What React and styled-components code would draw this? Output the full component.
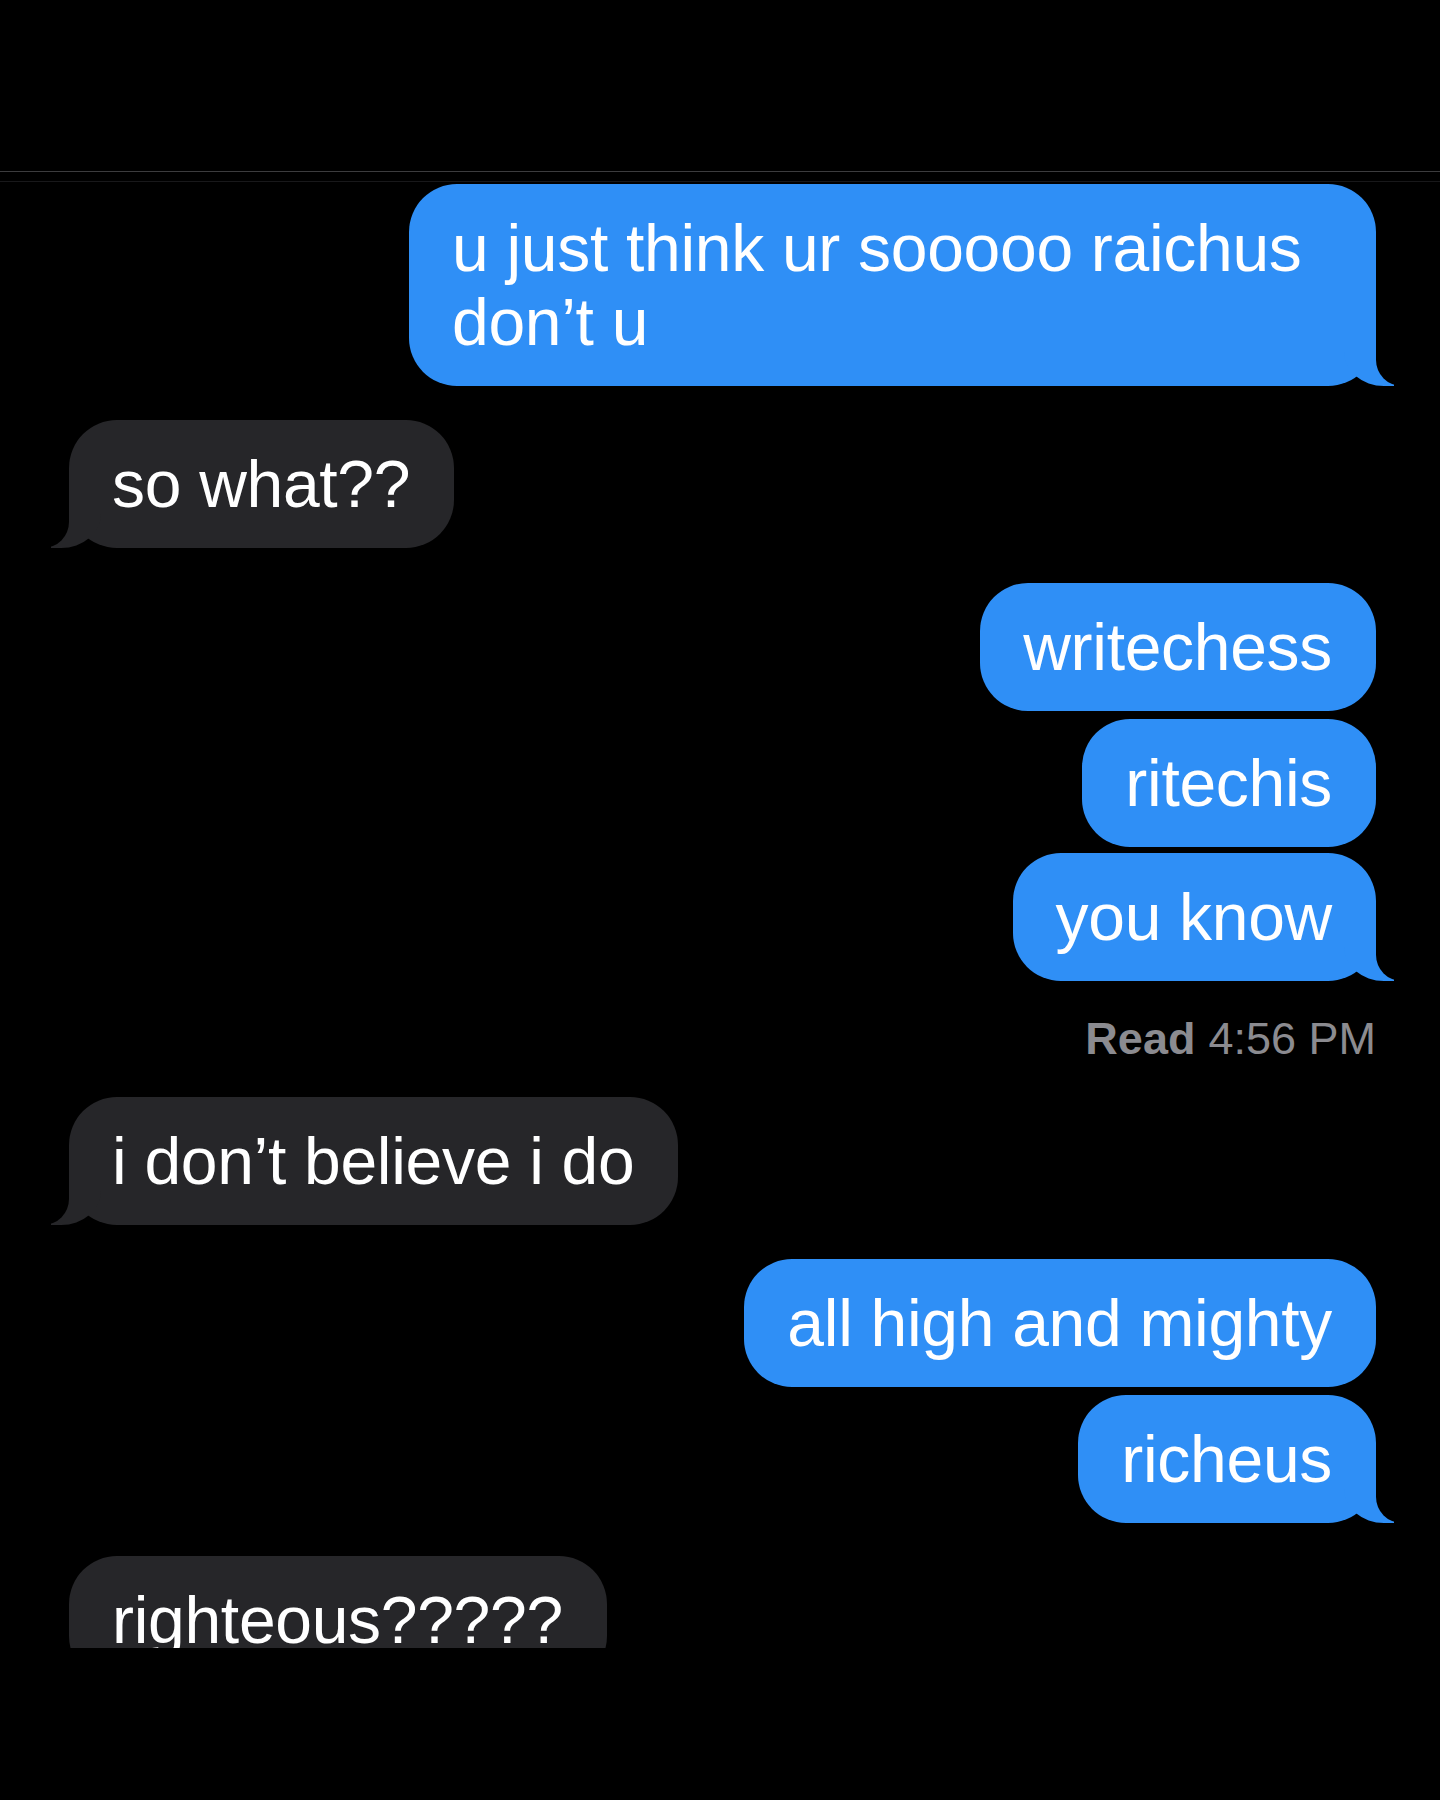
import React from "react";
import styled, { createGlobalStyle, css } from "styled-components";

const GlobalStyle = createGlobalStyle`
  html, body {
    margin: 0;
    padding: 0;
    background: #000;
  }
  body {
    font-family: "Liberation Sans", Arial, Helvetica, sans-serif;
    -webkit-font-smoothing: antialiased;
  }
  * { box-sizing: border-box; }
`;

const BLUE = "#2f8ff6";
const GRAY = "#262629";

const Page = styled.div`
  width: 1440px;
  height: 1800px;
  background: #000;
  display: flex;
  flex-direction: column;
  overflow: hidden;
`;

const Header = styled.header`
  height: 172px;
  flex: none;
  border-bottom: 1px solid #3c3c3e;
`;

const Thread = styled.main`
  flex: none;
  height: 1467px;
  margin-top: 9px;
  border-top: 1px solid #18181a;
  padding: 2px 64px 0 69px;
  display: flex;
  flex-direction: column;
  overflow: hidden;
`;

const Row = styled.div`
  display: flex;
  justify-content: ${(p) => (p.$mine ? "flex-end" : "flex-start")};
  margin-top: ${(p) => p.$gap}px;
  flex: none;
`;

const tailMine = css`
  &::before {
    content: "";
    position: absolute;
    bottom: 0;
    right: -18px;
    width: 50px;
    height: 58px;
    background: ${BLUE};
    border-bottom-left-radius: 40px 34px;
  }
  &::after {
    content: "";
    position: absolute;
    bottom: 0;
    right: -62px;
    width: 62px;
    height: 60px;
    background: #000;
    border-bottom-left-radius: 26px;
  }
`;

const tailTheirs = css`
  &::before {
    content: "";
    position: absolute;
    bottom: 0;
    left: -18px;
    width: 50px;
    height: 58px;
    background: ${GRAY};
    border-bottom-right-radius: 40px 34px;
  }
  &::after {
    content: "";
    position: absolute;
    bottom: 0;
    left: -62px;
    width: 62px;
    height: 60px;
    background: #000;
    border-bottom-right-radius: 26px;
  }
`;

const Bubble = styled.div`
  position: relative;
  max-width: 967px;
  padding: 27px 44px 27px 43px;
  border-radius: 48px;
  background: ${(p) => (p.$mine ? BLUE : GRAY)};
  color: #fff;
  font-size: 66px;
  line-height: 74px;
  letter-spacing: -0.3px;
  white-space: normal;
  ${(p) => p.$tail && (p.$mine ? tailMine : tailTheirs)}
`;

const BubbleText = styled.span`
  position: relative;
  z-index: 1;
`;

const Receipt = styled.div`
  display: flex;
  justify-content: flex-end;
  gap: 13px;
  margin-top: ${(p) => p.$gap}px;
  font-size: 45px;
  line-height: 54px;
  color: #8b8b90;
  flex: none;
`;

const ReceiptLabel = styled.span`
  font-weight: 700;
`;

const items = [
  { mine: true, tail: true, gap: 0, text: "u just think ur sooooo raichus don\u2019t u" },
  { mine: false, tail: true, gap: 34, text: "so what??" },
  { mine: true, tail: false, gap: 35, text: "writechess" },
  { mine: true, tail: false, gap: 8, text: "ritechis" },
  { mine: true, tail: true, gap: 6, text: "you know" },
  { receipt: true, gap: 31 },
  { mine: false, tail: true, gap: 31, text: "i don\u2019t believe i do" },
  { mine: true, tail: false, gap: 34, text: "all high and mighty" },
  { mine: true, tail: true, gap: 8, text: "richeus" },
  { mine: false, tail: false, gap: 33, text: "righteous?????" },
];

export default function App() {
  return (
    <>
      <GlobalStyle />
      <Page>
        <Header />
        <Thread>
          {items.map((m, i) =>
            m.receipt ? (
              <Receipt key={i} $gap={m.gap}>
                <ReceiptLabel>Read</ReceiptLabel>
                <span>4:56 PM</span>
              </Receipt>
            ) : (
              <Row key={i} $mine={m.mine} $gap={m.gap}>
                <Bubble $mine={m.mine} $tail={m.tail}>
                  <BubbleText>{m.text}</BubbleText>
                </Bubble>
              </Row>
            )
          )}
        </Thread>
      </Page>
    </>
  );
}
